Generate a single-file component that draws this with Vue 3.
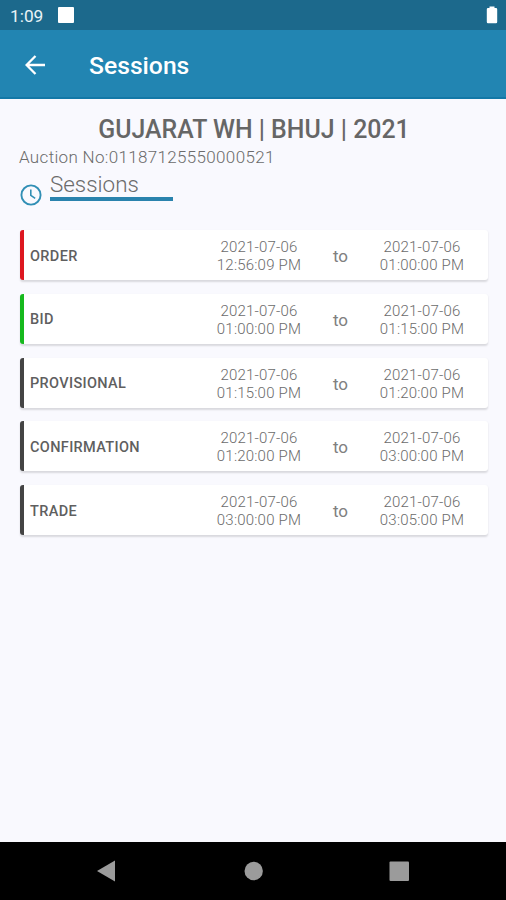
<script setup>
const sessions = [
  { name: 'ORDER', tone: 'red', start: '12:56:09 PM', end: '01:00:00 PM' },
  { name: 'BID', tone: 'green', start: '01:00:00 PM', end: '01:15:00 PM' },
  { name: 'PROVISIONAL', tone: 'dark', start: '01:15:00 PM', end: '01:20:00 PM' },
  { name: 'CONFIRMATION', tone: 'dark', start: '01:20:00 PM', end: '03:00:00 PM' },
  { name: 'TRADE', tone: 'dark', start: '03:00:00 PM', end: '03:05:00 PM' },
]
const date = '2021-07-06'
</script>

<template>
  <div class="screen">
    <div class="status">
      <span class="clock">1:09</span>
      <span class="notice"></span>
      <svg class="battery" width="12" height="18" viewBox="0 0 12 18"><path d="M3.500 2V.5h5V2H10a1.200 1.200 0 0 1 1.200 1.200V16A1.200 1.200 0 0 1 10 17.200H2A1.200 1.200 0 0 1 .8 16V3.200A1.200 1.200 0 0 1 2 2z" fill="#fff" /></svg>
    </div>
    <header class="bar">
      <svg class="back" width="20" height="20" viewBox="0 0 20 20" fill="none" stroke="#fff" stroke-width="2.300"><path d="M20 10H2M10.500 1 1.600 10l8.900 9" /></svg>
      <span class="title">Sessions</span>
    </header>
    <main class="content">
      <h1 class="heading">GUJARAT WH | BHUJ | 2021</h1>
      <div class="auction">Auction No:01187125550000521</div>
      <div class="section">
        <svg class="time" width="22" height="22" viewBox="0 0 22 22" fill="none" stroke="#318fb5"><circle cx="11" cy="11" r="9.600" stroke-width="1.900" /><path d="M10.800 5.500v5.900l4.400 3" stroke-width="1.600" /></svg>
        <span class="label">Sessions</span>
      </div>
      <div class="list">
        <div v-for="s in sessions" :key="s.name" class="card" :class="s.tone">
          <span class="name">{{ s.name }}</span>
          <span class="when">{{ date }}<br />{{ s.start }}</span>
          <span class="to">to</span>
          <span class="when">{{ date }}<br />{{ s.end }}</span>
        </div>
      </div>
    </main>
    <nav class="nav">
      <svg width="506" height="58" viewBox="0 0 506 58" fill="#9b9b9b"><path d="M97 29 115 18.500v21z" /><circle cx="253.700" cy="29" r="9.200" /><rect x="389.500" y="19.500" width="19.500" height="19.500" rx="1" /></svg>
    </nav>
  </div>
</template>

<style>
body { margin: 0; }
</style>

<style scoped>
.screen {
  width: 506px;
  height: 900px;
  display: flex;
  flex-direction: column;
  overflow: hidden;
  background: #f9f9fe;
  font-family: Roboto, sans-serif;
  color: #6b6b6b;
}
.status {
  flex: none;
  height: 30px;
  box-sizing: border-box;
  padding: 0 8px 0 10px;
  display: flex;
  align-items: center;
  background: #1c698c;
}
.clock { width: 48px; font-size: 17.300px; line-height: 30px; padding-top: 1px; color: #e9f3f7; }
.notice { width: 16px; height: 16px; border-radius: 1px; background: #fff; }
.battery { margin-left: auto; }
.bar {
  flex: none;
  height: 69px;
  box-sizing: border-box;
  padding-left: 25px;
  border-bottom: 2px solid #1378a7;
  display: flex;
  align-items: center;
  background: #2285b2;
}
.back { margin-top: 2px; }
.title { margin: 4px 0 0 44px; font-size: 24.700px; font-weight: 500; color: #fff; }
.content { flex: 1; padding: 16px 17px 0 19px; }
.heading {
  margin: 0;
  height: 29px;
  line-height: 29px;
  text-align: center;
  font-size: 24.900px;
  font-weight: 500;
  color: #666;
  white-space: nowrap;
}
.auction { height: 27px; line-height: 27px; font-size: 17px; font-weight: 300; letter-spacing: 0.330px; }
.section { display: flex; height: 33px; }
.time { margin: 13px 9px 0 1px; }
.label {
  width: 123px;
  height: 30px;
  margin-left: -1px;
  box-sizing: border-box;
  line-height: 27px;
  border-bottom: 4px solid #2a83ad;
  font-size: 22.400px;
  font-weight: 300;
}
.list { display: grid; gap: 13.750px; margin: 26.200px 1px 0 1px; }
.card {
  height: 50px;
  box-sizing: border-box;
  display: grid;
  grid-template-columns: 166.500px 125px 38px 125px;
  align-items: center;
  padding: 2px 0 0 6px;
  border-left: 4px solid #444;
  border-radius: 3px;
  background: #fff;
  box-shadow: 0 1.500px 2px rgba(0, 0, 0, 0.13);
}
.red { border-left-color: #dd1720; }
.green { border-left-color: #16b91d; }
.name { font-size: 14.500px; font-weight: 500; letter-spacing: 0.350px; color: #5f5f5f; }
.when { font-size: 15px; line-height: 18px; font-weight: 300; letter-spacing: 0.200px; text-align: center; }
.to { font-size: 17px; text-align: center; color: #808080; }
.nav { flex: none; height: 58px; background: #000; }
.nav svg { display: block; }
</style>
